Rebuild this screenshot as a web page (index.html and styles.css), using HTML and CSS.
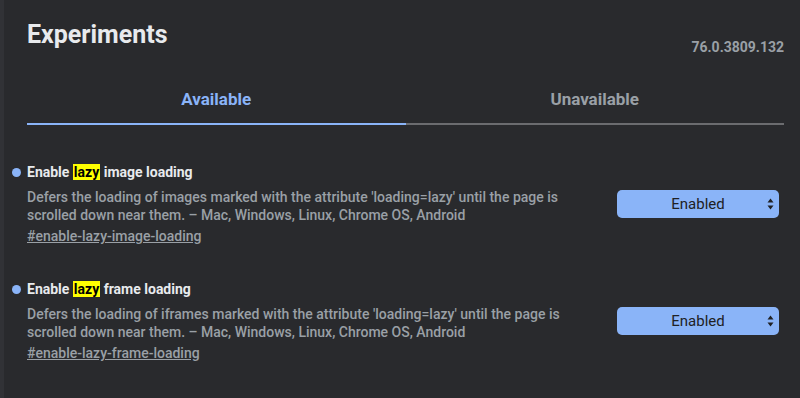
FILE: index.html
```html
<!DOCTYPE html>
<html lang="en">
<head>
    <meta charset="UTF-8">
    <meta name="viewport" content="width=device-width, initial-scale=1.0">
    <title>Experiments</title>
    <link rel="stylesheet" href="styles.css">
</head>
<body>
<div class="page">
    <div class="header">
        <h1>Experiments</h1>
        <span class="version">76.0.3809.132</span>
    </div>
    <div class="tabs">
        <div class="tab active">Available</div>
        <div class="tab">Unavailable</div>
    </div>
    <div class="experiment">
        <div class="info">
            <h3 class="name">Enable <mark>lazy</mark> image loading</h3>
            <p class="desc">Defers the loading of images marked with the attribute 'loading=lazy' until the page is scrolled down near them. – Mac, Windows, Linux, Chrome OS, Android</p>
            <a class="link" href="#enable-lazy-image-loading">#enable-lazy-image-loading</a>
        </div>
        <div class="select">
            <span>Enabled</span>
            <svg width="7" height="12" viewBox="0 0 7 12"><path d="M3.5 0.5L6.5 4.5H0.5Z M3.5 11.5L6.5 7.5H0.5Z" fill="#202124"/></svg>
        </div>
    </div>
    <div class="experiment">
        <div class="info">
            <h3 class="name">Enable <mark>lazy</mark> frame loading</h3>
            <p class="desc">Defers the loading of iframes marked with the attribute 'loading=lazy' until the page is scrolled down near them. – Mac, Windows, Linux, Chrome OS, Android</p>
            <a class="link" href="#enable-lazy-frame-loading">#enable-lazy-frame-loading</a>
        </div>
        <div class="select">
            <span>Enabled</span>
            <svg width="7" height="12" viewBox="0 0 7 12"><path d="M3.5 0.5L6.5 4.5H0.5Z M3.5 11.5L6.5 7.5H0.5Z" fill="#202124"/></svg>
        </div>
    </div>
</div>
</body>
</html>
```

FILE: styles.css
```css
body {
    margin: 0;
    background-color: #292a2d;
    font-family: Roboto, 'Liberation Sans', sans-serif;
    color: #e8eaed;
}
.page {
    min-height: 398px;
    box-sizing: border-box;
    border-left: 4px solid #313236;
    padding: 20px 16px 0 23px;
}
.header {
    display: flex;
    justify-content: space-between;
    align-items: flex-end;
}
h1 {
    margin: 0;
    font-size: 25px;
    line-height: 30px;
    font-weight: 700;
}
.version {
    font-size: 14px;
    font-weight: 700;
    color: #9aa0a6;
    line-height: 18px;
    margin-bottom: -6px;
}
.tabs {
    display: grid;
    grid-template-columns: 1fr 1fr;
    margin-top: 25px;
}
.tab {
    text-align: center;
    font-size: 17px;
    font-weight: 700;
    line-height: 20px;
    padding: 14px 0;
    color: #9aa0a6;
    border-bottom: 2px solid #6b6c6f;
}
.tab.active {
    color: #8ab4f8;
    border-bottom-color: #8ab4f8;
}
.experiment {
    display: flex;
    align-items: center;
    gap: 40px;
    padding-right: 5px;
    margin-top: 37px;
}
.experiment + .experiment {
    margin-top: 34px;
}
.info {
    flex: 1;
}
.name {
    margin: 0;
    font-size: 14px;
    line-height: 20px;
    font-weight: 700;
    color: #e8eaed;
}
.name::before {
    content: "";
    display: inline-block;
    width: 9px;
    height: 9px;
    border-radius: 50%;
    background-color: #8ab4f8;
    margin-left: -15px;
    margin-right: 6px;
    vertical-align: 0;
}
mark {
    background-color: #ffff00;
    color: #000;
    padding: 0 1px;
}
.desc {
    margin: 6px 0 0;
    font-size: 14px;
    line-height: 18px;
    font-weight: 500;
    color: #9aa0a6;
}
.link {
    display: block;
    margin-top: 3px;
    font-size: 14px;
    line-height: 18px;
    font-weight: 500;
    color: #9aa0a6;
}
.select {
    width: 162px;
    height: 28px;
    box-sizing: border-box;
    background-color: #8ab4f8;
    border-radius: 5px;
    display: grid;
    grid-template-columns: 1fr auto;
    align-items: center;
    padding: 0 5px 0 12px;
    font-size: 15px;
    color: #202124;
}
.select span {
    text-align: center;
}
```
